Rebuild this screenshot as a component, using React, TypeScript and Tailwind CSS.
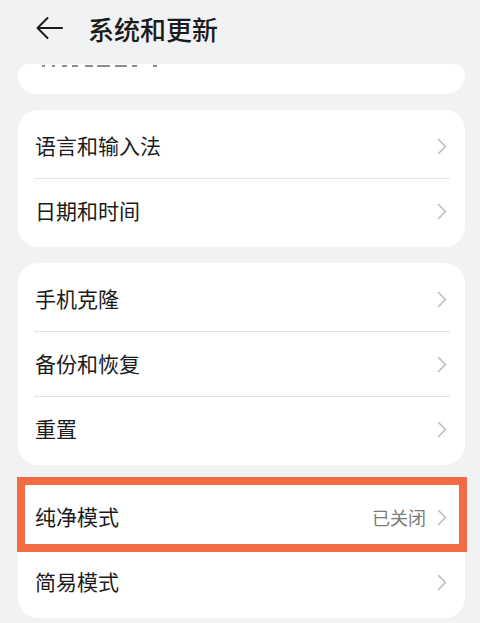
import React from 'react';

const Chevron = () => (
  <svg width="10" height="17" viewBox="0 0 10 17" fill="none" className="shrink-0">
    <path d="M1.5 1.5 L8.5 8.5 L1.5 15.5" stroke="#bdbdbd" strokeWidth="1.6" strokeLinecap="round" strokeLinejoin="round" />
  </svg>
);

type Item = { label: string; value?: string; highlight?: boolean };

const Row = ({ item, last }: { item: Item; last: boolean }) => (
  <div className="relative">
    <div className="flex items-center justify-between h-[64px] pl-[17px] pr-[18px]">
      <span className="text-[21px] text-[#1b1b1b]">{item.label}</span>
      <div className="flex items-center gap-[11px]">
        {item.value && <span className="text-[18px] text-[#7a7a7a]">{item.value}</span>}
        <Chevron />
      </div>
    </div>
    {!last && <div className="ml-[16px] mr-[15px] h-px bg-[#e3e3e3]" />}
    {item.highlight && (
      <div className="absolute left-[-1px] top-[-8px] w-[450px] h-[75px] border-[8px] border-[#f26b43]" />
    )}
  </div>
);

const Card = ({ items }: { items: Item[] }) => (
  <div className="bg-white rounded-[20px] py-[4px]">
    {items.map((item, i) => (
      <Row key={item.label} item={item} last={i === items.length - 1} />
    ))}
  </div>
);

// bottoms of the first card's text, scrolled under the title bar
const marks = [
  [24, 3], [34, 3], [44, 5], [54, 6], [67, 8], [79, 13], [97, 12], [114, 5], [135, 4],
];

const App = () => {
  return (
    <div
      className="w-[480px] h-[623px] overflow-hidden bg-[#f1f2f4]"
      style={{ fontFamily: '"Noto Sans CJK SC", "Noto Sans", sans-serif' }}
    >
      <div className="h-[64px] flex items-center">
        <svg width="28" height="24" viewBox="0 0 28 24" fill="none" className="ml-[36px] mt-[-8px]">
          <path d="M1.5 12 H26 M11.5 2 L1.5 12 L11.5 22" stroke="#1b1b1b" strokeWidth="2" strokeLinecap="round" strokeLinejoin="round" />
        </svg>
        <span className="ml-[24px] mt-[-8px] text-[26px] font-medium text-[#1b1b1b]">系统和更新</span>
      </div>

      <div className="ml-[18px] mr-[15px] flex flex-col gap-[16px]">
        <div className="relative h-[30px] bg-white rounded-b-[20px] rounded-t-[12px]">
          {marks.map(([x, w]) => (
            <div
              key={x}
              className="absolute top-[1px] h-[2px] bg-[#8c8c8c]"
              style={{ left: x, width: w }}
            />
          ))}
        </div>
        <Card items={[{ label: '语言和输入法' }, { label: '日期和时间' }]} />
        <Card items={[{ label: '手机克隆' }, { label: '备份和恢复' }, { label: '重置' }]} />
        <Card items={[{ label: '纯净模式', value: '已关闭', highlight: true }, { label: '简易模式' }]} />
      </div>
    </div>
  );
};

export default App;
